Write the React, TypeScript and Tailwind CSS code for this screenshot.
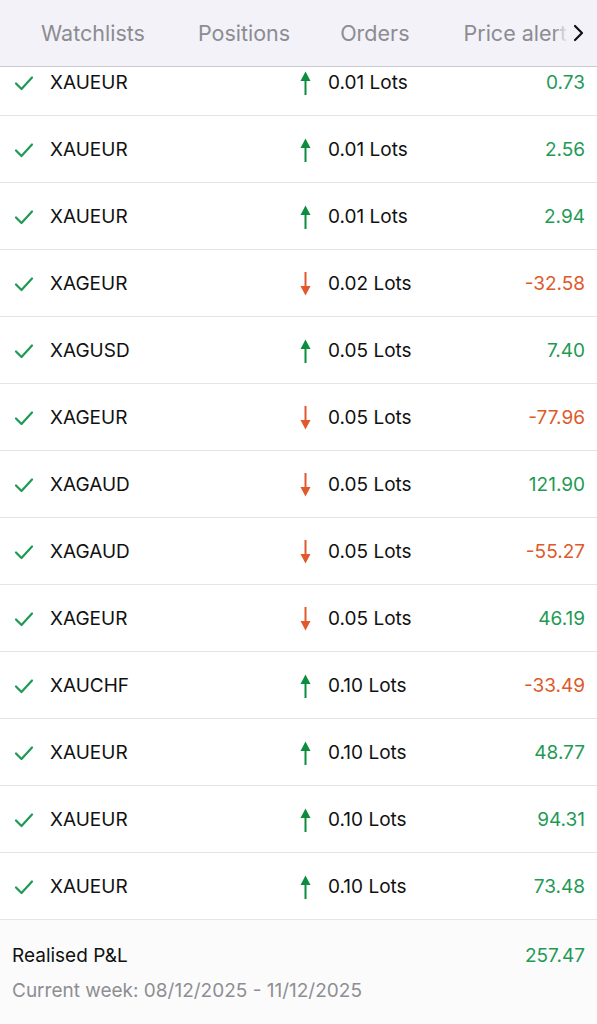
import React from 'react'

type Trade = { symbol: string; up: boolean; lots: string; pnl: string }

const trades: Trade[] = [
    { symbol: 'XAUEUR', up: true, lots: '0.01', pnl: '0.73' },
    { symbol: 'XAUEUR', up: true, lots: '0.01', pnl: '2.56' },
    { symbol: 'XAUEUR', up: true, lots: '0.01', pnl: '2.94' },
    { symbol: 'XAGEUR', up: false, lots: '0.02', pnl: '-32.58' },
    { symbol: 'XAGUSD', up: true, lots: '0.05', pnl: '7.40' },
    { symbol: 'XAGEUR', up: false, lots: '0.05', pnl: '-77.96' },
    { symbol: 'XAGAUD', up: false, lots: '0.05', pnl: '121.90' },
    { symbol: 'XAGAUD', up: false, lots: '0.05', pnl: '-55.27' },
    { symbol: 'XAGEUR', up: false, lots: '0.05', pnl: '46.19' },
    { symbol: 'XAUCHF', up: true, lots: '0.10', pnl: '-33.49' },
    { symbol: 'XAUEUR', up: true, lots: '0.10', pnl: '48.77' },
    { symbol: 'XAUEUR', up: true, lots: '0.10', pnl: '94.31' },
    { symbol: 'XAUEUR', up: true, lots: '0.10', pnl: '73.48' },
]

const Check = () => (
    <svg width="20" height="16" viewBox="0 0 20 16" fill="none">
        <path d="M2 8.5 L7.5 14 L18 2.5" stroke="#1f9a55" strokeWidth="2.2" strokeLinecap="round" strokeLinejoin="round" />
    </svg>
)

// thin shaft with a filled head, flipped for sells
const Arrow = ({ up }: { up: boolean }) => (
    <svg width="11" height="24" viewBox="0 0 11 24" className={up ? '' : 'rotate-180'}>
        <path d="M5.5 8 L5.5 24" stroke={up ? '#0b8c3e' : '#e2582c'} strokeWidth="2" />
        <path d="M0.5 10 L5.5 0.5 L10.5 10 Z" fill={up ? '#0b8c3e' : '#e2582c'} />
    </svg>
)

const Row = ({ t }: { t: Trade }) => {
    const neg = t.pnl.startsWith('-')
    return (
        <div className="flex h-[67px] items-center border-b border-[#e4e4e7] bg-white pl-[14px] pr-[12px] pt-[2px] text-[19px] text-[#111]">
            <Check />
            <span className="ml-[16px] w-[250px]">{t.symbol}</span>
            <Arrow up={t.up} />
            <span className="ml-[17px]">{t.lots} Lots</span>
            <span className={`ml-auto ${neg ? 'text-[#dd5a2b]' : 'text-[#1f9a55]'}`}>{t.pnl}</span>
        </div>
    )
}

export default function App() {
    return (
        <div className="flex h-[1024px] w-[597px] flex-col overflow-hidden bg-[#fbfbfc]" style={{ fontFamily: 'Inter, "Noto Sans", sans-serif' }}>
            <header className="z-10 flex h-[67px] shrink-0 items-center border-b border-[#c9c9ce] bg-[#f2f2f8] text-[21.5px] text-[#8c8c92]">
                <span className="ml-[41px]">Watchlists</span>
                <span className="ml-[53px]">Positions</span>
                <span className="ml-[50px]">Orders</span>
                <span className="relative ml-[54px] w-[104px] overflow-hidden whitespace-nowrap">
                    Price alert
                    <span className="absolute right-0 top-0 h-full w-[14px] bg-gradient-to-r from-transparent to-[#f2f2f8]" />
                </span>
                <svg width="12" height="20" viewBox="0 0 12 20" className="ml-[4px]">
                    <path d="M3 3 L10 10 L3 17" stroke="#111" strokeWidth="2.2" fill="none" strokeLinecap="round" strokeLinejoin="round" />
                </svg>
            </header>
            <div className="h-[853px] shrink-0 overflow-hidden">
                <div className="-mt-[18px]">
                    {trades.map((t, i) => (
                        <Row key={i} t={t} />
                    ))}
                </div>
            </div>
            <div className="flex flex-col px-[12px] pt-[22px] text-[19px]">
                <div className="flex items-center justify-between">
                    <span className="text-[#111]">Realised P&amp;L</span>
                    <span className="text-[#1f9a55]">257.47</span>
                </div>
                <span className="mt-[6px] text-[#8e8e93]">Current week: 08/12/2025 - 11/12/2025</span>
            </div>
        </div>
    )
}
